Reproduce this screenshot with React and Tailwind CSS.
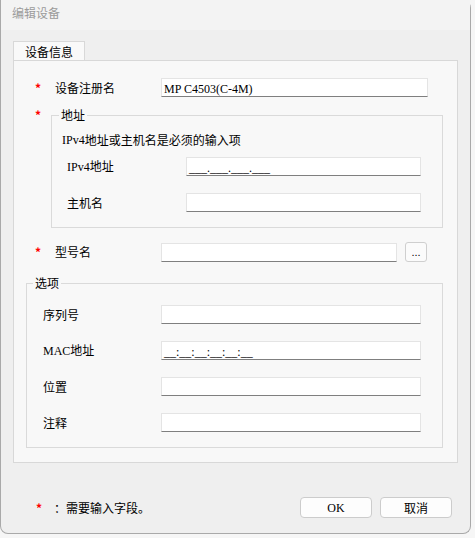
import React from 'react';

const Star = ({ w }) => (
  <span className={`${w} shrink-0 text-[12px] leading-[16px] font-bold text-[#ff0000]`}>*</span>
);

const Field = ({ w, children }) => (
  <div
    className={`${w} h-[19px] shrink-0 bg-white border border-[#e4e4e4] border-b-[#7f7f7f] px-[1px] text-[12px] leading-[17px] text-black whitespace-pre overflow-hidden`}
  >
    {children}
  </div>
);

const App = () => {
  return (
    <div className="w-[475px] h-[538px] bg-[#f6f6f6] font-['Liberation_Serif','Noto_Sans_CJK_SC',serif] text-black text-[12px] overflow-hidden">
      <div className="w-[471px] h-[534px] bg-[#efefef] border-x border-b border-[#a9a9a9] rounded-tr-[8px] rounded-b-[8px] flex flex-col">
        {/* title bar */}
        <div className="h-[30px] bg-[#f3f3f3] pl-[11px] pt-[5px] text-[12px] leading-[16px] text-[#9b9b9b] font-['Noto_Sans_CJK_SC',sans-serif]">
          编辑设备
        </div>

        {/* tab */}
        <div className="ml-[12px] mt-[11px] w-[72px] h-[20px] bg-[#f9f9f9] border-x border-t border-[#d8d8d8] text-center text-[12px] leading-[19px] font-['Noto_Sans_CJK_SC',sans-serif]">
          设备信息
        </div>

        {/* panel */}
        <div className="ml-[12px] -mt-[1px] w-[445px] h-[403px] bg-[#f8f8f8] border border-[#d8d8d8] font-['Noto_Sans_CJK_SC',sans-serif]">
          <div className="flex items-center pl-[21px] mt-[17px]">
            <Star w="w-[20px]" />
            <span className="w-[106px] shrink-0">设备注册名</span>
            <Field w="w-[267px]">
              <span className="font-['Liberation_Serif',serif] pl-[1px]">MP C4503(C-4M)</span>
            </Field>
          </div>

          <div className="flex items-start pl-[21px] mt-[10px]">
            <Star w="w-[16px]" />
            <fieldset className="w-[392px] border border-[#dadada] pb-[15px]">
              <legend className="ml-[7px] px-[2px] leading-[16px]">地址</legend>
              <div className="pl-[10px] mt-[9px] h-[16px] flex items-center">
                <span className="font-['Liberation_Serif',serif]">IPv4</span>
                <span>地址或主机名是必须的输入项</span>
              </div>
              <div className="flex items-center pl-[15px] mt-[9px]">
                <span className="w-[119px] shrink-0">
                  <span className="font-['Liberation_Serif',serif]">IPv4</span>地址
                </span>
                <Field w="w-[235px]">
                  <span className="font-['Liberation_Serif',serif] pl-[1px]">___.___.___.___</span>
                </Field>
              </div>
              <div className="flex items-center pl-[15px] mt-[17px]">
                <span className="w-[119px] shrink-0">主机名</span>
                <Field w="w-[235px]" />
              </div>
            </fieldset>
          </div>

          <div className="flex items-center pl-[21px] mt-[14px]">
            <Star w="w-[20px]" />
            <span className="w-[106px] shrink-0">型号名</span>
            <Field w="w-[236px]" />
            <button className="ml-[8px] w-[22px] h-[20px] bg-[#fbfbfb] border border-[#cfcfcf] rounded-[3px] text-[11px] leading-[14px] font-['Liberation_Sans',sans-serif]">
              ...
            </button>
          </div>

          <fieldset className="ml-[12px] mt-[13px] w-[417px] border border-[#dadada] pb-[15px]">
            <legend className="ml-[6px] px-[2px] leading-[16px]">选项</legend>
            <div className="flex items-center pl-[16px] mt-[14px]">
              <span className="w-[118px] shrink-0">序列号</span>
              <Field w="w-[260px]" />
            </div>
            <div className="flex items-center pl-[16px] mt-[17px]">
              <span className="w-[118px] shrink-0">
                <span className="font-['Liberation_Serif',serif]">MAC</span>地址
              </span>
              <Field w="w-[260px]">
                <span className="font-['Liberation_Serif',serif] pl-[1px]">__:__:__:__:__:__</span>
              </Field>
            </div>
            <div className="flex items-center pl-[16px] mt-[17px]">
              <span className="w-[118px] shrink-0">位置</span>
              <Field w="w-[260px]" />
            </div>
            <div className="flex items-center pl-[16px] mt-[17px]">
              <span className="w-[118px] shrink-0">注释</span>
              <Field w="w-[260px]" />
            </div>
          </fieldset>
        </div>

        {/* footer */}
        <div className="flex items-center mt-[34px] pl-[35px] font-['Noto_Sans_CJK_SC',sans-serif]">
          <Star w="w-[18px]" />
          <span className="leading-[16px]">：需要输入字段。</span>
          <div className="ml-auto mr-[18px] flex gap-[8px]">
            <button className="w-[72px] h-[21px] bg-[#fdfdfd] border border-[#cccccc] rounded-[4px] text-[12px] leading-[18px] font-['Liberation_Serif',serif]">
              OK
            </button>
            <button className="w-[72px] h-[21px] bg-[#fdfdfd] border border-[#cccccc] rounded-[4px] text-[12px] leading-[18px]">
              取消
            </button>
          </div>
        </div>
      </div>
    </div>
  );
};

export default App;
